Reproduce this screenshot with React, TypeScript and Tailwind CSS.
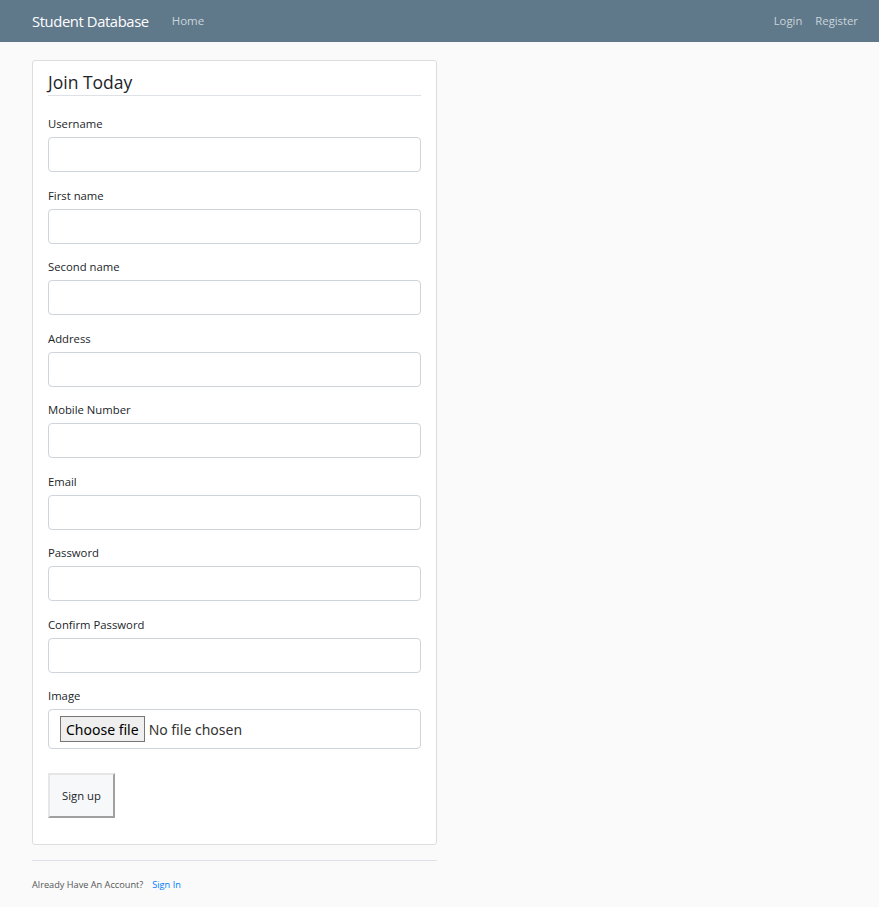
import React from 'react';

const fields = [
  { id: 'username', label: 'Username', type: 'text' },
  { id: 'first_name', label: 'First name', type: 'text' },
  { id: 'second_name', label: 'Second name', type: 'text' },
  { id: 'address', label: 'Address', type: 'text' },
  { id: 'mobile', label: 'Mobile Number', type: 'text' },
  { id: 'email', label: 'Email', type: 'email' },
  { id: 'password', label: 'Password', type: 'password' },
  { id: 'confirm_password', label: 'Confirm Password', type: 'password' },
];

export default function App() {
  return (
    <div
      className="min-h-[907px] bg-[#fafafa] text-[#212529]"
      style={{ fontFamily: '"Open Sans", "Noto Sans", sans-serif' }}
    >
      <header className="h-[42px] bg-[#5f788a] flex items-center justify-between pl-[32px] pr-[21px]">
        <div className="flex items-center">
          <span className="text-white text-[14.8px] tracking-[-0.4px]">Student Database</span>
          <a href="#" className="ml-[23px] text-[11.5px] text-[#cbd5db]">Home</a>
        </div>
        <nav className="flex items-center gap-[13px] text-[11.3px] text-[#cbd5db]">
          <a href="#">Login</a>
          <a href="#">Register</a>
        </nav>
      </header>

      <main className="w-[405px] ml-[32px] pt-[18px]">
        <div className="bg-white border border-[#dddddd] rounded-[3px] pt-[9px] pb-[26px] px-[15px]">
          <form>
            <fieldset>
              <legend className="w-full text-[17.5px] leading-[25px] text-[#212529] border-b border-[#dee2e6] mb-[18px]">
                Join Today
              </legend>

              {fields.map((f) => (
                <div key={f.id} className="mb-[13.5px]">
                  <label htmlFor={f.id} className="block text-[11.3px] leading-[19px] mb-[4px]">
                    {f.label}
                  </label>
                  <input
                    id={f.id}
                    type={f.type}
                    className="block w-full h-[35px] border border-[#ced4da] rounded-[4px] px-[11px] text-[14px] bg-white outline-none"
                  />
                </div>
              ))}

              <div className="mb-[24px]">
                <label htmlFor="picture" className="block text-[11.3px] leading-[19px] mb-[4px]">
                  Image
                </label>
                <div className="flex items-center w-full h-[40px] border border-[#ced4da] rounded-[4px] px-[11px]">
                  <span
                    className="h-[26px] px-[5px] border border-[#767676] bg-[#efefef] text-[14px] leading-[25px] text-black"
                    style={{ fontFamily: '"Noto Sans", "Open Sans", sans-serif' }}
                  >
                    Choose file
                  </span>
                  <span
                    className="ml-[4px] text-[14px] text-[#333]"
                    style={{ fontFamily: '"Noto Sans", "Open Sans", sans-serif' }}
                  >
                    No file chosen
                  </span>
                </div>
              </div>
            </fieldset>

            <button
              type="button"
              className="h-[45px] w-[67px] pt-[2px] bg-[#f7f8f9] text-[11.3px] text-[#212529] border-2 border-t-[#e6e6e6] border-l-[#e6e6e6] border-r-[#a0a0a0] border-b-[#a0a0a0]"
            >
              Sign up
            </button>
          </form>
        </div>

        <div className="border-t border-[#dee2e6] mt-[15px] pt-[9px]">
          <small className="text-[9.2px] text-[#555]">
            Already Have An Account?
            <a href="#" className="ml-[9px] text-[#007bff]">Sign In</a>
          </small>
        </div>
      </main>
    </div>
  );
}
